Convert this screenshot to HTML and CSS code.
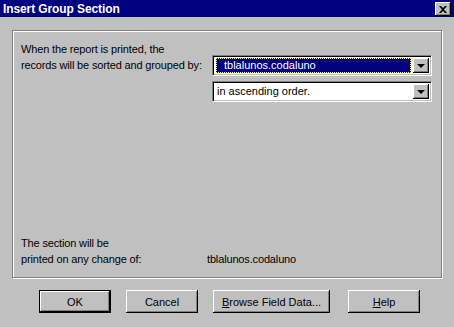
FILE: index.html
```html
<!DOCTYPE html>
<html lang="en">
<head>
  <meta charset="UTF-8">
  <title>Insert Group Section</title>
  <link rel="stylesheet" href="styles.css">
</head>
<body>
  <div class="dialog">
    <div class="titlebar">
      <span class="title">Insert Group Section</span>
      <button class="close" aria-label="Close">
        <svg width="8" height="7" viewBox="0 0 8 7"><path d="M0 0h2l2 2 2-2h2L5 3.5 8 7H6L4 5 2 7H0l3-3.5z" fill="#000"/></svg>
      </button>
    </div>

    <div class="group">
      <div class="sort-row">
        <p class="label">When the report is printed, the<br>records will be sorted and grouped by:</p>
        <div class="combos">
          <div class="combo">
            <div class="combo-value selected"><span>tblalunos.codaluno</span></div>
            <span class="drop"><i></i></span>
          </div>
          <div class="combo">
            <div class="combo-value">in ascending order.</div>
            <span class="drop"><i></i></span>
          </div>
        </div>
      </div>
      <div class="change-row">
        <p class="label">The section will be<br>printed on any change of:</p>
        <span class="field">tblalunos.codaluno</span>
      </div>
    </div>

    <div class="buttons">
      <button class="btn default">OK</button>
      <button class="btn">Cancel</button>
      <button class="btn wide"><u>B</u>rowse Field Data...</button>
      <button class="btn"><u>H</u>elp</button>
    </div>
  </div>
</body>
</html>
```

FILE: styles.css
```css
* { box-sizing: border-box; }
body { margin: 0; background: #c0c0c0; font-family: "Liberation Sans", Arial, sans-serif; font-size: 11px; color: #000; }
.dialog { width: 454px; height: 327px; background: #c0c0c0; display: flex; flex-direction: column; }

.titlebar { height: 17px; flex: none; background: #000080; display: flex; align-items: center; justify-content: space-between; padding: 0 3px 0 3px; }
.title { color: #fff; font-weight: bold; font-size: 12px; letter-spacing: -0.1px; }
.close {
  width: 16px; height: 14px; padding: 0; margin-top: 1px; background: #c0c0c0; border: none;
  display: flex; align-items: center; justify-content: center;
  box-shadow: inset -1px -1px #000, inset 1px 1px #fff, inset -2px -2px #808080;
}

.group {
  margin: 13px 0 0 12px; width: 430px; height: 248px; flex: none;
  border: 1px solid #808080; box-shadow: inset 1px 1px #fff, 1px 1px #fff;
  display: flex; flex-direction: column; justify-content: space-between;
  padding: 10px 9px 10px 8px;
}
.label { margin: 0; line-height: 16px; letter-spacing: -0.15px; }
.sort-row { display: flex; justify-content: space-between; }
.combos { display: flex; flex-direction: column; gap: 5px; padding-top: 14px; }

.combo {
  width: 220px; height: 21px; background: #fff; display: flex; align-items: stretch;
  border: 1px solid; border-color: #808080 #fff #fff #808080;
  box-shadow: inset 1px 1px #000, inset -1px -1px #c0c0c0;
  padding: 2px 2px 2px 3px;
}
.combo-value { flex: 1; line-height: 15px; padding-left: 1px; }
.combo-value.selected { background: #000080; color: #fff; outline: 1px dotted #ff0; outline-offset: -1px; padding-left: 8px; margin-right: 2px; }
.drop {
  width: 16px; background: #c0c0c0; display: flex; align-items: center; justify-content: center;
  box-shadow: inset -1px -1px #000, inset 1px 1px #fff, inset -2px -2px #808080;
}
.drop i { width: 0; height: 0; border-left: 4px solid transparent; border-right: 4px solid transparent; border-top: 4px solid #000; }

.change-row { display: flex; align-items: flex-end; }
.change-row .label { width: 186px; }
.field { line-height: 16px; letter-spacing: -0.15px; }

.buttons { display: flex; padding: 12px 0 0 39px; gap: 15px; }
.btn {
  width: 72px; height: 23px; font-family: inherit; font-size: 11px; background: #c0c0c0; border: none; padding: 0; color: #000;
  box-shadow: inset -1px -1px #000, inset 1px 1px #fff, inset -2px -2px #808080;
}
.btn.default { box-shadow: inset 0 0 0 1px #000, inset -2px -2px #000, inset 2px 2px #fff, inset -3px -3px #808080; }
.btn.wide { width: 117px; margin-right: 3px; }
```
